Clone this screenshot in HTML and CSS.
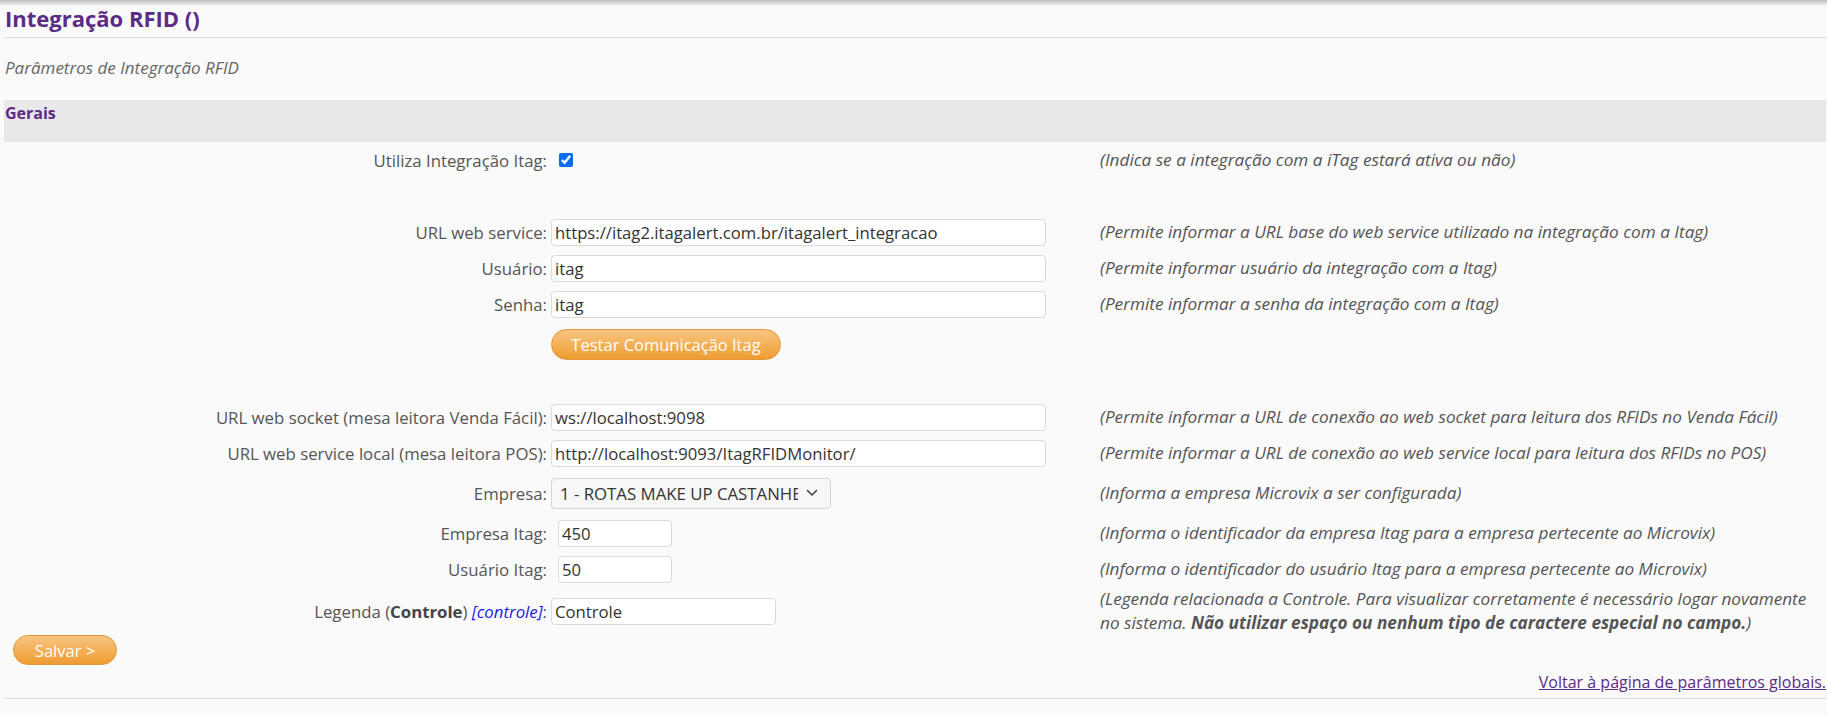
FILE: index.html
```html
<!DOCTYPE html>
<html>
<head>
  <meta charset="UTF-8">
  <title>Integração RFID</title>
  <link rel="stylesheet" href="styles.css">
</head>
<body>
  <div class="page">
    <div class="title">Integração RFID ()</div>
    <div class="subtitle">Parâmetros de Integração RFID</div>

    <div class="group-title">Gerais</div>

    <div class="form">
      <div class="row">
        <div class="label">Utiliza Integração Itag:</div>
        <div class="field"><input type="checkbox" class="check" checked></div>
        <div class="desc">(Indica se a integração com a iTag estará ativa ou não)</div>
      </div>

      <div class="row"></div>

      <div class="row">
        <div class="label">URL web service:</div>
        <div class="field"><input type="text" class="text-input wide" value="https://itag2.itagalert.com.br/itagalert_integracao"></div>
        <div class="desc">(Permite informar a URL base do web service utilizado na integração com a Itag)</div>
      </div>
      <div class="row">
        <div class="label">Usuário:</div>
        <div class="field"><input type="text" class="text-input wide" value="itag"></div>
        <div class="desc">(Permite informar usuário da integração com a Itag)</div>
      </div>
      <div class="row">
        <div class="label">Senha:</div>
        <div class="field"><input type="text" class="text-input wide" value="itag"></div>
        <div class="desc">(Permite informar a senha da integração com a Itag)</div>
      </div>
      <div class="row row-button">
        <div class="label"></div>
        <div class="field"><button class="button test-button">Testar Comunicação Itag</button></div>
        <div class="desc"></div>
      </div>

      <div class="row row-spacer"></div>

      <div class="row">
        <div class="label">URL web socket (mesa leitora Venda Fácil):</div>
        <div class="field"><input type="text" class="text-input wide" value="ws://localhost:9098"></div>
        <div class="desc">(Permite informar a URL de conexão ao web socket para leitura dos RFIDs no Venda Fácil)</div>
      </div>
      <div class="row">
        <div class="label">URL web service local (mesa leitora POS):</div>
        <div class="field"><input type="text" class="text-input wide" value="http://localhost:9093/ItagRFIDMonitor/"></div>
        <div class="desc">(Permite informar a URL de conexão ao web service local para leitura dos RFIDs no POS)</div>
      </div>
      <div class="row row-select">
        <div class="label">Empresa:</div>
        <div class="field">
          <div class="select">
            <span class="select-value">1 - ROTAS MAKE UP CASTANHEIRA</span>
            <svg class="select-arrow" width="12" height="8" viewBox="0 0 12 8"><path d="M1.5 1.5 L6 6 L10.5 1.5" fill="none" stroke="#444" stroke-width="1.6" stroke-linecap="round" stroke-linejoin="round"/></svg>
          </div>
        </div>
        <div class="desc">(Informa a empresa Microvix a ser configurada)</div>
      </div>
      <div class="row">
        <div class="label">Empresa Itag:</div>
        <div class="field"><input type="text" class="text-input small" value="450"></div>
        <div class="desc">(Informa o identificador da empresa Itag para a empresa pertecente ao Microvix)</div>
      </div>
      <div class="row">
        <div class="label">Usuário Itag:</div>
        <div class="field"><input type="text" class="text-input small" value="50"></div>
        <div class="desc">(Informa o identificador do usuário Itag para a empresa pertecente ao Microvix)</div>
      </div>
      <div class="row row-legend">
        <div class="label">Legenda (<b>Controle</b>) <i class="tag">[controle]</i>:</div>
        <div class="field"><input type="text" class="text-input medium" value="Controle"></div>
        <div class="desc">(Legenda relacionada a Controle. Para visualizar corretamente é necessário logar novamente no sistema. <b>Não utilizar espaço ou nenhum tipo de caractere especial no campo.</b>)</div>
      </div>
    </div>

    <div class="actions">
      <button class="button save-button">Salvar &gt;</button>
    </div>

    <div class="back">
      <a href="#" class="back-link">Voltar à página de parâmetros globais.</a>
    </div>
  </div>
</body>
</html>
```

FILE: styles.css
```css
body {
  margin: 0;
  font-family: "Open Sans", Arial, sans-serif;
  font-size: 16.8px;
  color: #555;
  background: linear-gradient(#bdbdbd, #fafafa 6px) no-repeat, #fafafa;
}

.page {
  margin: 0 1px 0 4px;
  min-height: 715px;
  box-sizing: border-box;
  border-bottom: 1px solid transparent;
}

.title {
  font-weight: bold;
  font-size: 22px;
  line-height: 30px;
  color: #5b2b88;
  padding: 3px 0 0 1px;
  height: 38px;
  box-sizing: border-box;
  border-bottom: 1px solid #dcdcdc;
}

.subtitle {
  font-style: italic;
  font-size: 17px;
  line-height: 22px;
  color: #666;
  margin-top: 19px;
  padding-left: 1px;
}

.group-title {
  margin-top: 21px;
  height: 42px;
  box-sizing: border-box;
  padding: 3px 0 0 1px;
  background: #e8e8e8;
  font-weight: bold;
  font-size: 16px;
  line-height: 20px;
  color: #5b2b88;
}

.row {
  display: grid;
  grid-template-columns: 547px 548px 1fr;
  align-items: center;
  min-height: 36px;
}

.row-button {
  min-height: 44px;
}

.row-spacer {
  min-height: 33px;
}

.row-select {
  min-height: 44px;
}

.row-legend {
  min-height: 46px;
}

.label {
  text-align: right;
  padding-right: 4px;
  white-space: nowrap;
}

.label b {
  color: #444;
}

.tag {
  color: #1c1cf0;
}

.desc {
  font-style: italic;
  font-size: 17.2px;
  padding-left: 1px;
  line-height: 24px;
}

.desc b {
  color: #555;
}

.check {
  width: 14px;
  height: 14px;
  margin: 0 0 0 8px;
  accent-color: #0b6cf2;
  display: block;
}

.text-input {
  height: 27px;
  box-sizing: border-box;
  border: 1px solid #dadada;
  border-radius: 4px;
  background: #fff;
  padding: 0 3px;
  font-family: "Open Sans", Arial, sans-serif;
  font-size: 16.7px;
  color: #333;
  display: block;
}

.wide {
  width: 495px;
}

.small {
  width: 114px;
  margin-left: 7px;
}

.medium {
  width: 225px;
}

.select {
  width: 280px;
  height: 31px;
  box-sizing: border-box;
  border: 1px solid #d6d6d6;
  border-radius: 4px;
  background: #f7f7f7;
  display: flex;
  align-items: center;
  padding: 0 12px 0 8px;
  gap: 8px;
  color: #333;
}

.select-value {
  flex: 1;
  overflow: hidden;
  white-space: nowrap;
}

.button {
  border: 1px solid #e3963c;
  border-radius: 16px;
  background: linear-gradient(#f8c580, #ef9c31);
  color: #fff;
  font-family: "Open Sans", Arial, sans-serif;
  font-size: 16.5px;
  cursor: pointer;
  padding: 0;
  display: block;
}

.test-button {
  width: 230px;
  height: 31px;
}

.actions {
  padding: 0 0 0 9px;
}

.save-button {
  width: 104px;
  height: 30px;
}

.back {
  text-align: right;
  line-height: 20px;
  font-size: 16px;
  margin-top: 7px;
  padding-bottom: 6px;
  border-bottom: 1px solid #dcdcdc;
}

.back-link {
  color: #5b2b88;
}
```
